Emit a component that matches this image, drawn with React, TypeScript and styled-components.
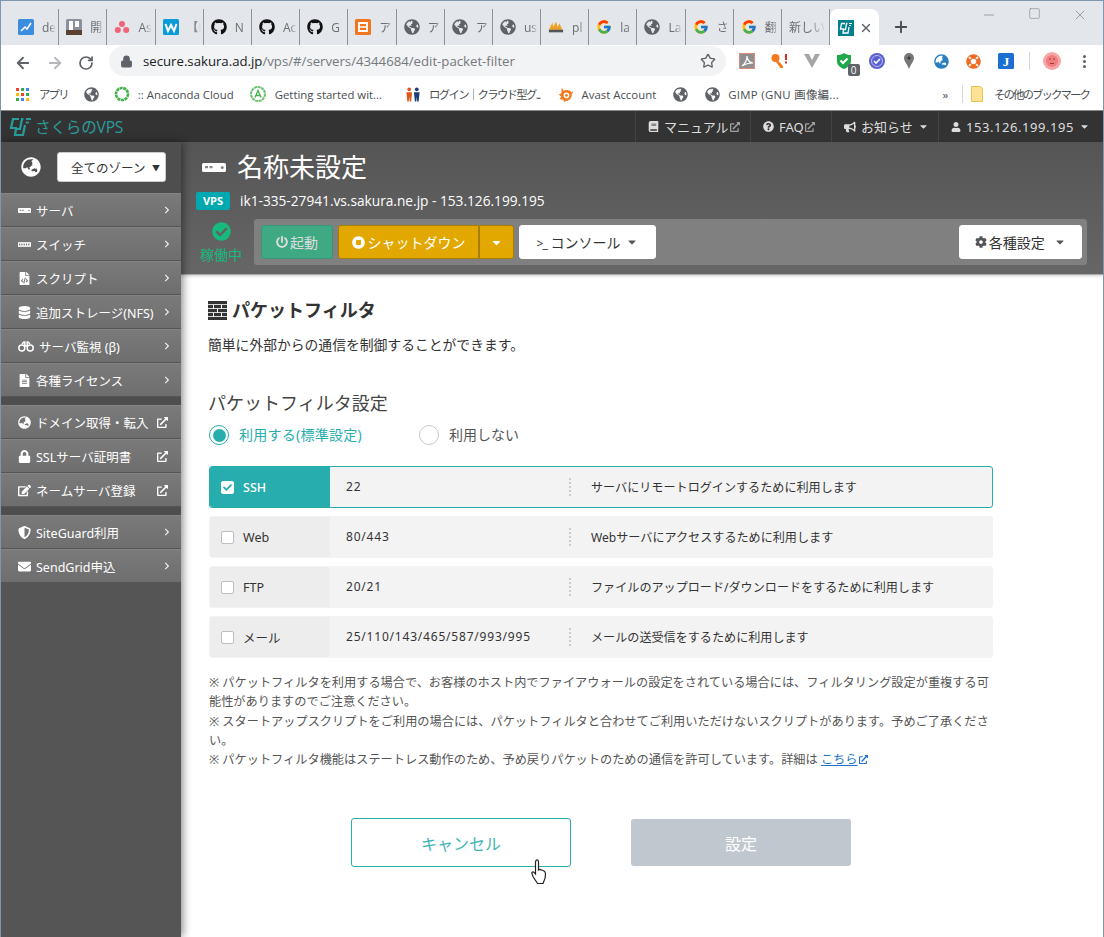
import React from "react";
import styled, { createGlobalStyle } from "styled-components";
import { ArrowLeft, ArrowRight, RotateCw, Star, Lock, Plus, X, Minus, Square } from "lucide-react";
import {
  FaBook, FaQuestionCircle, FaBullhorn, FaUser, FaGlobeAsia, FaFileAlt, FaDatabase, FaLock, FaEdit,
  FaShieldAlt, FaEnvelope, FaExternalLinkAlt, FaCog, FaPowerOff, FaStopCircle, FaCheckCircle, FaCaretDown, FaGithub,
  FaGlobeAmericas, FaCheck, FaFileCode, FaLifeRing, FaChevronRight,
} from "react-icons/fa";
import { FcGoogle } from "react-icons/fc";

const UI = `"Open Sans", "Noto Sans CJK JP", sans-serif`;
const PAGE = `"Noto Sans", "Noto Sans CJK JP", sans-serif`;

const Global = createGlobalStyle`
  html, body { margin: 0; padding: 0; background: #fff; }
  * { box-sizing: border-box; }
`;

const Win = styled.div`
  position: relative; width: 1104px; height: 937px; overflow: hidden; display: flex; flex-direction: column;
  border: 1px solid #7e97ad; border-bottom: 0; background: #fff; font-family: ${PAGE};
`;
const TabStrip = styled.div`
  height: 44px; background: #e3e6ea; display: flex; padding: 8px 0 0 10px; flex: none;
`;
const Tab = styled.div`
  width: 48.2px; height: 36px; display: flex; align-items: center; padding-left: 7px; overflow: hidden; flex: none;
  border-right: 1px solid #8f9296;
`;
const TabInner = styled.div`
  display: flex; align-items: center; gap: 8px; height: 36px; width: 100%; overflow: hidden;
`;
const TabIcon = styled.span`
  width: 16px; height: 16px; flex: none; display: flex; align-items: center; justify-content: center; font-size: 16px; color: ${p => p.color || "#5f6368"};
`;
const TabLabel = styled.span`
  font: 12px ${UI}; color: #6a6d70; white-space: nowrap; overflow: hidden;
  width: 14px; -webkit-mask-image: linear-gradient(90deg, #000 50%, transparent);
`;
const PlainTabLabel = styled(TabLabel)`
  width: 38px; flex: none;
`;
const ActiveTab = styled.div`
  width: 49px; height: 37px; background: #fff; border-radius: 8px 8px 0 0; display: flex; align-items: center; padding-left: 8px; gap: 5px; flex: none;
`;
const NewTab = styled.div`
  margin-left: 13px; height: 36px; display: flex; align-items: center; color: #494c50;
`;
const WinCtrls = styled.div`
  margin-left: auto; display: flex; gap: 31px; padding: 0 15px 0 0; height: 24px; margin-top: -2px; align-items: flex-start; color: #7a7c80;
`;
const Toolbar = styled.div`
  height: 36px; background: #fff; display: flex; align-items: center; flex: none; padding-left: 13px;
`;
const NavBtn = styled.span`
  width: 32px; display: flex; color: ${p => p.color || "#5f6368"};
`;
const Omni = styled.div`
  margin-left: -1px; width: 617px; height: 30px; border-radius: 15px; background: #f1f3f4; display: flex; align-items: center; padding: 0 10px 0 11px; gap: 10px; font: 13.2px ${UI}; color: #75787c; margin-top: -4px;
  b { font-weight: 400; color: #202124; }
`;
const OmniText = styled.span`
  flex: 1;
`;
const Exts = styled.div`
  display: flex; align-items: center; margin-left: 5px; margin-top: -4px;
`;
const Ext = styled.span`
  position: relative; width: 32.4px; height: 24px; display: flex; align-items: center; justify-content: center; font-size: 16px; color: ${p => p.color || "#555"};
`;
const Badge = styled.span`
  position: absolute; right: 1px; bottom: -3px; width: 12px; height: 12px; background: #5f6368; color: #fff; font: 10px/12px ${UI}; text-align: center; border-radius: 2px;
`;
const Sep = styled.span`
  width: 1px; height: 18px; background: #d4d6d8; margin: 0 6px;
`;
const Kebab = styled.span`
  display: flex; flex-direction: column; gap: 2px;
  i { width: 3px; height: 3px; border-radius: 50%; background: #5f6368; display: block; }
`;
const Bookmarks = styled.div`
  height: 29px; padding: 0 0 3px 15px; background: #fff; display: flex; align-items: center; flex: none; font: 11.4px ${UI}; color: #4a4d50;
`;
const BM = styled.span`
  display: flex; align-items: center; gap: ${p => p.$gap ?? 8}px; margin-right: ${p => p.$mr ?? 16}px; white-space: nowrap; letter-spacing: ${p => p.$ls ?? 0}px;
`;
const BMIcon = styled.span`
  width: 16px; height: 16px; display: flex; align-items: center; justify-content: center; font-size: 15px; color: ${p => p.color || "#5f6368"}; flex: none;
`;
const BMRight = styled.div`
  margin-left: auto; display: flex; align-items: center; padding-right: 14px;
`;
const TopNav = styled.div`
  height: 32px; background: #333; display: flex; flex: none; border-top: 1px solid #888;
  padding-left: 8px; align-items: stretch; justify-content: space-between;
`;
const Brand = styled.div`
  display: flex; align-items: center; gap: 2px; color: #2b9c9c; font: 15.6px ${UI}; letter-spacing: -.2px;
`;
const NavItems = styled.div`
  display: flex; font: 13px ${PAGE}; color: #ddd;
`;
const NavItem = styled.div`
  width: ${p => p.$w}px; display: flex; align-items: center; gap: 5px; padding: 0 0 0 12px; border-left: 1px solid #444; white-space: nowrap; letter-spacing: ${p => p.$ls ?? 0}px;
  svg { flex: none; }
`;
const Ext2 = styled(FaExternalLinkAlt)`
  font-size: 10px; opacity: .65; margin-left: -4px;
`;
const Body = styled.div`
  flex: 1; display: flex; min-height: 0;
`;
const Side = styled.div`
  width: 180px; flex: none; background: #555; box-shadow: 2px 0 8px rgba(0,0,0,.45); z-index: 2; display: flex; flex-direction: column;
`;
const ZoneBar = styled.div`
  height: 51px; padding: 0 15px 1px 20px; background: #4e4e4e; display: flex; align-items: center; gap: 16px; color: #fff; font-size: 20px; flex: none;
`;
const ZoneSel = styled.div`
  flex: 1; height: 30px; background: #fff; border-radius: 3px; border: 1px solid #ccc; font: 12.5px ${PAGE}; color: #333; display: flex; align-items: center; justify-content: space-between; padding: 0 5px 0 13px;
  i { font-style: normal; font-size: 8px; }
`;
const Item = styled.div`
  height: 34px; display: flex; align-items: center; background: linear-gradient(#7a7a7a, #6e6e6e); border-bottom: 1px solid #555; border-top: 1px solid #848484; color: #fff; font: 12.5px ${PAGE}; padding: 0 13px 0 17px; gap: 5px; white-space: nowrap; flex: none;
  svg { flex: none; }
  span { flex: 1; }
`;
const Arrow = styled.span`
  flex: none !important; margin-right: -3px; display: flex; font-size: 8px; color: #eee;
`;
const Gap = styled.div`
  height: 8px; background: #4e4e4e; flex: none;
`;
const Main = styled.div`
  flex: 1; min-width: 0; display: flex; flex-direction: column;
`;
const Head = styled.div`
  height: 133px; flex: none; background: linear-gradient(#555, #666); border-bottom: 1px solid #aaa; box-shadow: 0 1px 3px rgba(0,0,0,.2); padding: 8px 16px 0 15px; color: #fff;
`;
const TitleRow = styled.div`
  display: flex; align-items: center; gap: 9px; padding-left: 4px; font: 26px/34px ${PAGE};
`;
const HostRow = styled.div`
  margin-top: 8px; display: flex; align-items: center; gap: 10px; font: 500 13.7px/18px ${UI}; white-space: nowrap;
`;
const VpsBadge = styled.span`
  width: 34px; height: 18px; background: #00a9b0; border-radius: 2px; font: 700 11px/18px ${UI}; text-align: center;
`;
const CtrlRow = styled.div`
  display: flex; align-items: center; margin-top: 9px;
`;
const Status = styled.div`
  width: 58px; padding: 2px 8px 0 0; flex: none; display: flex; flex-direction: column; align-items: center; color: #17b97e; font: 14px/18px ${PAGE}; gap: 5px;
  svg { font-size: 19px; }
`;
const Panel = styled.div`
  flex: 1; height: 46px; background: #808080; border-radius: 3px; display: flex; align-items: center; padding: 0 5px 0 7px; gap: 5px; font: 14px ${PAGE};
`;
const Btn = styled.div`
  height: 34px; width: ${p => p.$w}px; border-radius: 3px; display: flex; align-items: center; justify-content: center; gap: ${p => p.$gap ?? 2}px; flex: none; white-space: nowrap;
  background: ${p => p.$bg}; color: ${p => p.$fg || "#fff"}; border: 1px solid ${p => p.$bd || p.$bg};
`;
const SplitBtn = styled(Btn)`
  border-radius: 3px 0 0 3px; margin-right: -5px;
`;
const SplitEnd = styled(Btn)`
  border-radius: 0 3px 3px 0; border-left: 1px solid #a67e00;
`;
const Prompt = styled.span`
  font-size: 12px; letter-spacing: -1px;
`;
const Push = styled.div`
  margin-left: auto;
`;
const Content = styled.div`
  flex: 1; padding: 24px 0 0 27px; position: relative;
`;
const H2 = styled.h2`
  margin: 0; display: flex; align-items: center; gap: 5px; font: 700 18px/22px ${PAGE}; color: #333;
`;
const Lead = styled.p`
  margin: 14px 0 0 0; font: 13.8px/20px ${PAGE}; color: #333;
`;
const H3 = styled.h3`
  margin: 35px 0 0; font: 400 18px/26px ${PAGE}; color: #444;
`;
const Radios = styled.div`
  display: flex; align-items: center; margin-top: 9px; margin-left: 1px; font: 14px/20px ${PAGE};
`;
const Radio = styled.div`
  display: flex; align-items: center; gap: 10px; color: ${p => p.$on ? "#27adad" : "#555"}; width: ${p => p.$w}px; letter-spacing: ${p => p.$on ? ".25px" : "0"};
`;
const Dot = styled.span`
  width: 20px; height: 20px; border-radius: 50%; flex: none; background: #fff; border: 1px solid ${p => p.$on ? "#27adad" : "#c5cad1"}; display: flex; align-items: center; justify-content: center;
  &::after { content: ""; width: 13px; height: 13px; border-radius: 50%; background: ${p => p.$on ? "#27adad" : "transparent"}; }
`;
const Rows = styled.div`
  width: 784px; margin-top: 21px; display: flex; flex-direction: column; gap: 8px; margin-left: 1px;
`;
const Row = styled.div`
  height: 42px; display: flex; align-items: center; background: #f3f3f3; border-radius: 3px; overflow: hidden; font: 12px ${PAGE}; color: #333; border: 1px solid ${p => p.$on ? "#27adad" : "#f3f3f3"};
`;
const Name = styled.div`
  width: 120px; align-self: stretch; display: flex; align-items: center; gap: 9px; padding-left: 11px; flex: none; font-size: 12.5px;
  background: ${p => p.$on ? "#27adad" : "#ededed"}; color: ${p => p.$on ? "#fff" : "#333"}; ${p => p.$on ? "font-weight: 500;" : ""}
`;
const Check = styled.span`
  width: 13px; height: 13px; border-radius: 2px; flex: none; display: flex; align-items: center; justify-content: center; color: #27adad; font-size: 9px;
  background: #fff; border: 1px solid ${p => p.$on ? "#fff" : "#b9bec5"};
`;
const Port = styled.div`
  width: 241px; padding-left: 16px; flex: none; border-right: 2px dotted #ccc; height: 18px; line-height: 18px; letter-spacing: .8px;
`;
const Desc = styled.div`
  padding-left: 20px; font-size: 12.1px; white-space: nowrap;
`;
const Notes = styled.div`
  width: 784px; margin: 15px 0 0 1px; font: 12.2px/19.3px ${PAGE}; color: #555;
  a { color: #1a73c9; text-decoration: underline; }
  svg { font-size: 9px; color: #1a73c9; margin-left: 2px; }
`;
const Actions = styled.div`
  display: flex; gap: 60px; margin: 49px 0 0 143px; align-items: center; font: 16px ${PAGE};
`;
const Cancel = styled.div`
  width: 220px; height: 49px; border: 1px solid #27adad; border-radius: 3px; color: #3db5b5; display: flex; align-items: center; justify-content: center;
`;
const Submit = styled.div`
  width: 220px; height: 47px; background: #c1c7cf; border-radius: 3px; color: #fff; display: flex; align-items: center; justify-content: center;
`;
const Cursor = styled.svg`
  position: absolute; left: 530px; top: 858px; z-index: 5;
`;

const Sakura = () => (
  <svg width="24" height="20" viewBox="0 0 24 20" fill="none" stroke="#2b9c9c" strokeWidth="2.2">
    <path d="M10 2H4L2 11H8M14.500 2H13L11 12H7L6 18H14L16 8" />
    <path d="M17 2h5M16.800 5.500h3" />
  </svg>
);
const ServerIcon = ({ w = 16, h = 6 }: { w?: number; h?: number }) => (
  <svg width={w} height={h} viewBox="0 0 16 6">
    <rect width="16" height="6" rx="1" fill="#fff" />
    <rect x="2" y="2" width="2" height="1.500" fill="#888" /><rect x="5" y="2" width="2" height="1.500" fill="#888" />
    <circle cx="13.500" cy="3" r="1" fill="#888" />
  </svg>
);
const SwitchIcon = () => (
  <svg width="13" height="5" viewBox="0 0 14 5"><rect width="14" height="5" fill="#fff" />
    {[1, 3.5, 6, 8.5, 11].map(x => <rect key={x} x={x} y="1.500" width="1.400" height="2" fill="#777" />)}</svg>
);
const Binoc = () => (
  <svg width="16" height="11" viewBox="0 0 16 11" fill="none" stroke="#fff" strokeWidth="1.500">
    <circle cx="3.800" cy="7" r="3" /><circle cx="12.200" cy="7" r="3" /><path d="M4 3 6 1h.8v4h2.400V1h.8l2 2" />
  </svg>
);
const Brick = () => (
  <svg width="19" height="19" viewBox="0 0 19 19" fill="#333">
    <rect y="0" width="19" height="3.200" /><rect y="4" width="5" height="3.200" /><rect x="6" y="4" width="7" height="3.200" /><rect x="14" y="4" width="5" height="3.200" />
    <rect y="8" width="9" height="3.200" /><rect x="10" y="8" width="9" height="3.200" /><rect y="12" width="5" height="3.200" /><rect x="6" y="12" width="7" height="3.200" /><rect x="14" y="12" width="5" height="3.200" />
    <rect y="16" width="19" height="3" />
  </svg>
);
const Anaconda = () => (
  <svg width="16" height="16" viewBox="0 0 16 16"><circle cx="8" cy="8" r="6" fill="none" stroke="#43b049" strokeWidth="2.600" strokeDasharray="3 .6" /></svg>
);
const AIcon = () => (
  <svg width="16" height="16" viewBox="0 0 16 16"><circle cx="8" cy="8" r="7" fill="none" stroke="#6cc070" strokeWidth="2" strokeDasharray="3 .6" />
    <path d="M5 11.500 8 4.500l3 7M6 9.500h4" fill="none" stroke="#4caf50" strokeWidth="1.400" /></svg>
);
const People = () => (
  <svg width="17" height="17" viewBox="0 0 17 17">
    <circle cx="4.500" cy="3" r="2" fill="#e0561b" /><path d="M1.500 6h6l-1 10H5L4.500 11 4 16H2.500z" fill="#e0561b" />
    <circle cx="12.500" cy="3" r="2" fill="#1d3c78" /><path d="M9.500 6h6l-1 10H13l-.5-5-.5 5h-1.500z" fill="#1d3c78" />
  </svg>
);
const Avast = () => (
  <svg width="17" height="17" viewBox="0 0 17 17"><path d="M4 1 6 4.500C9 3 13 4 14 6L16.500 5 14.500 8.500C15 12 12 15.500 8 15.500L7 16.800 5.500 14 1.500 13.500 3.500 11 .8 8.500 3.500 7.500z" fill="#f47a20" />
    <circle cx="9" cy="9.500" r="3" fill="#fff" /><circle cx="9" cy="9.500" r="1.400" fill="#f47a20" /></svg>
);
const Apps = () => (
  <svg width="13" height="13" viewBox="0 0 13 13">
    {[["#ea4335", "#34a853", "#4285f4"], ["#fbbc05", "#ea4335", "#34a853"], ["#34a853", "#4285f4", "#fbbc05"]].map((r, y) => r.map((c, x) => <rect key={`${x}${y}`} x={x * 5} y={y * 5} width="3" height="3" fill={c} />))}
  </svg>
);
const Folder = () => (
  <svg width="12" height="16" viewBox="0 0 12 16"><path d="M.5.500h9l2 2v13H.5z" fill="#fde293" stroke="#e8c34f" /></svg>
);
const Asana = () => (
  <svg width="16" height="16" viewBox="0 0 16 16" fill="#f0647a"><circle cx="8" cy="5" r="3" /><circle cx="3.800" cy="11" r="3" /><circle cx="12.200" cy="11" r="3" /></svg>
);
const SiteLogo = () => (
  <svg width="16" height="16" viewBox="0 0 16 16"><rect width="16" height="16" fill="#007f8c" /><path d="M7 3.500H3.500L2.500 9H6M9.500 3.500H8.500L7.500 9.500H5.500L5 13H10L11 7" stroke="#fff" strokeWidth="1.300" fill="none" /><path d="M11 3.500h3M11 5.500h2" stroke="#fff" strokeWidth="1.200" /></svg>
);
const Tile = ({ bg, children }: { bg: string; children?: React.ReactNode }) => (
  <svg width="16" height="16" viewBox="0 0 16 16"><rect width="16" height="16" rx="1.500" fill={bg} />{children}</svg>
);

const tabs: { icon: React.ReactNode; label: string }[] = [
  { icon: <Tile bg="#3c8ce0"><path d="M3 12 7 8l2 2 4-6" stroke="#fff" strokeWidth="1.500" fill="none" /></Tile>, label: "de" },
  { icon: <Tile bg="#8d8f9a"><path d="M3 2h4v9H3zM9 2h4v6H9z" fill="#fff" /><rect y="11" width="16" height="5" fill="#5a4030" /></Tile>, label: "開" },
  { icon: <Asana />, label: "As" },
  { icon: <Tile bg="#0d9bd8"><path d="M2.500 5l2.500 7 3-6 3 6 2.500-7" stroke="#fff" strokeWidth="2" fill="none" /></Tile>, label: "【I" },
  { icon: <FaGithub color="#111" />, label: "N" },
  { icon: <FaGithub color="#111" />, label: "Ac" },
  { icon: <FaGithub color="#111" />, label: "G" },
  { icon: <Tile bg="#f0761f"><path d="M4 4h8v8H4z" fill="none" stroke="#fff" strokeWidth="1.800" /><path d="M4 8h8" stroke="#fff" strokeWidth="1.500" /></Tile>, label: "ア" },
  { icon: <FaGlobeAmericas />, label: "ア" },
  { icon: <FaGlobeAmericas />, label: "ア" },
  { icon: <FaGlobeAmericas />, label: "us" },
  { icon: <svg width="18" height="14" viewBox="0 0 18 14"><path d="M1 10 5 2l1 5 3-6 2 6 2-4 3 7z" fill="#f0a020" /><rect x="1" y="10" width="16" height="3" fill="#555" /></svg>, label: "pl" },
  { icon: <FcGoogle />, label: "la" },
  { icon: <FaGlobeAmericas />, label: "La" },
  { icon: <FcGoogle />, label: "さ" },
  { icon: <FcGoogle />, label: "翻" },
];

const menu1: [React.ReactNode, string][] = [
  [<ServerIcon w={13} h={5} />, "サーバ"],
  [<SwitchIcon />, "スイッチ"],
  [<FaFileCode size={13} />, "スクリプト"],
  [<FaDatabase size={13} />, "追加ストレージ(NFS)"],
  [<Binoc />, "サーバ監視 (β)"],
  [<FaFileAlt size={13} />, "各種ライセンス"],
];
const menu2: [React.ReactNode, string][] = [
  [<FaGlobeAsia size={13} />, "ドメイン取得・転入"],
  [<FaLock size={13} />, "SSLサーバ証明書"],
  [<FaEdit size={13} />, "ネームサーバ登録"],
];
const menu3: [React.ReactNode, string][] = [
  [<FaShieldAlt size={13} />, "SiteGuard利用"],
  [<FaEnvelope size={13} />, "SendGrid申込"],
];

const rows = [
  { name: "SSH", port: "22", desc: "サーバにリモートログインするために利用します", on: true },
  { name: "Web", port: "80/443", desc: "Webサーバにアクセスするために利用します", on: false },
  { name: "FTP", port: "20/21", desc: "ファイルのアップロード/ダウンロードをするために利用します", on: false },
  { name: "メール", port: "25/110/143/465/587/993/995", desc: "メールの送受信をするために利用します", on: false },
];

const MenuRow = ({ icon, label, ext }: { icon: React.ReactNode; label: string; ext?: boolean }) => (
  <Item>
    {icon}
    <span>{label}</span>
    {ext ? <FaExternalLinkAlt size={11} /> : <Arrow><FaChevronRight /></Arrow>}
  </Item>
);

const ActiveTabGroup = () => (
  <>
    <Tab><TabInner><PlainTabLabel>新しい</PlainTabLabel></TabInner></Tab>
    <ActiveTab>
      <SiteLogo />
      <X size={14} color="#5f6368" strokeWidth={2.5} />
    </ActiveTab>
    <NewTab><Plus size={18} strokeWidth={2.5} /></NewTab>
    <WinCtrls>
      <Minus size={16} strokeWidth={1} />
      <Square size={13} strokeWidth={1} />
      <X size={16} strokeWidth={1} />
    </WinCtrls>
  </>
);

export default function App() {
  return (
    <Win>
      <Global />
      <TabStrip>
        {tabs.map((t, i) => (
          <Tab key={i}>
            <TabInner>
              <TabIcon>{t.icon}</TabIcon>
              <TabLabel>{t.label}</TabLabel>
            </TabInner>
          </Tab>
        ))}
        <ActiveTabGroup />
      </TabStrip>
      <Toolbar>
        <NavBtn><ArrowLeft size={18} strokeWidth={2.4} /></NavBtn>
        <NavBtn color="#b5b7ba"><ArrowRight size={18} strokeWidth={2.4} /></NavBtn>
        <NavBtn><RotateCw size={16} strokeWidth={2.6} /></NavBtn>
        <Omni>
          <Lock size={13} fill="#5f6368" color="#5f6368" />
          <OmniText><b>secure.sakura.ad.jp</b>/vps/#/servers/4344684/edit-packet-filter</OmniText>
          <Star size={16} color="#5f6368" />
        </Omni>
        <Exts>
          <Ext><svg width="16" height="16" viewBox="0 0 16 16"><rect x=".5" y=".5" width="15" height="15" fill="#8f8f8f" stroke="#e08a7a" /><path d="M3 13c4-3 5-7 5-10 0 4 3 7 6 7-4 0-8 1-11 3z" fill="none" stroke="#fff" strokeWidth="1.200" /></svg></Ext>
          <Ext><svg width="17" height="16" viewBox="0 0 17 16"><circle cx="4.500" cy="5" r="4" fill="#f47a20" /><path d="M6.500 7 12 13v2h-2.500L5 9z" fill="#f47a20" /><rect x="14" y="1" width="2" height="6" fill="#d32f2f" /><rect x="14" y="8.500" width="2" height="2" fill="#d32f2f" /></svg></Ext>
          <Ext><svg width="16" height="14" viewBox="0 0 16 14"><path d="M0 0h5l3 6 3-6h5L8 14z" fill="#a5a5a5" /></svg></Ext>
          <Ext><svg width="14" height="16" viewBox="0 0 14 16"><path d="M7 0c2 1.500 4 2 7 2v6c0 4-3 6.500-7 8-4-1.500-7-4-7-8V2c3 0 5-.5 7-2z" fill="#1fa84d" /><path d="M3.500 7.500 6 10l4.500-4.500" stroke="#fff" strokeWidth="2" fill="none" /></svg><Badge>0</Badge></Ext>
          <Ext><svg width="16" height="16" viewBox="0 0 16 16"><circle cx="8" cy="8" r="8" fill="#5a5fcf" /><circle cx="8" cy="8" r="5.500" fill="none" stroke="#fff" strokeWidth=".6" /><path d="M5 8l2 2 4-4" stroke="#fff" strokeWidth="1.600" fill="none" /></svg></Ext>
          <Ext><svg width="10" height="16" viewBox="0 0 10 16"><path d="M5 0a5 5 0 0 1 5 5c0 3-3 6-5 11C3 11 0 8 0 5a5 5 0 0 1 5-5z" fill="#777" /><circle cx="5" cy="5" r="1.500" fill="#333" /></svg></Ext>
          <Ext color="#2a7fc0"><FaGlobeAsia size={15} /></Ext>
          <Ext color="#f26a21"><FaLifeRing size={15} /></Ext>
          <Ext><Tile bg="#1a6fd0"><text x="8" y="13" fontSize="13" fontWeight="700" fontFamily="Liberation Serif" fill="#fff" textAnchor="middle">J</text></Tile></Ext>
          <Sep />
          <Ext><svg width="18" height="18" viewBox="0 0 18 18"><circle cx="9" cy="9" r="9" fill="#f7a5a5" /><circle cx="9" cy="9" r="6" fill="#ef7f7f" /><path d="M6 7h2M10 7h2M7 11.500h4" stroke="#a33" strokeWidth="1" /></svg></Ext>
          <Ext><Kebab><i /><i /><i /></Kebab></Ext>
        </Exts>
      </Toolbar>
      <Bookmarks>
        <BM $mr={16} $gap={10} $ls={-1.8}><Apps />アプリ</BM>
        <BM $mr={14}><BMIcon><FaGlobeAmericas /></BMIcon></BM>
        <BM><BMIcon><Anaconda /></BMIcon>:: Anaconda Cloud</BM>
        <BM $mr={23} $gap={9}><BMIcon><AIcon /></BMIcon>Getting started wit...</BM>
        <BM $mr={18} $ls={-1.7}><BMIcon><People /></BMIcon>ログイン｜クラウド型グ...</BM>
        <BM><BMIcon><Avast /></BMIcon>Avast Account</BM>
        <BM><BMIcon><FaGlobeAmericas /></BMIcon></BM>
        <BM $ls={.3}><BMIcon><FaGlobeAmericas /></BMIcon>GIMP (GNU 画像編...</BM>
        <BMRight>
          <BM $mr={8}>»</BM>
          <Sep />
          <BM $mr={0} $gap={9} $ls={-1.9}><BMIcon><Folder /></BMIcon>その他のブックマーク</BM>
        </BMRight>
      </Bookmarks>
      <TopNav>
        <Brand><Sakura />さくらのVPS</Brand>
        <NavItems>
          <NavItem $w={115}><FaBook size={11} /> マニュアル<Ext2 /></NavItem>
          <NavItem $w={81}><FaQuestionCircle size={11} /> FAQ<Ext2 /></NavItem>
          <NavItem $w={107}><FaBullhorn size={12} /> お知らせ <FaCaretDown size={11} /></NavItem>
          <NavItem $w={165} $ls={.55}><FaUser size={10} /> 153.126.199.195 <FaCaretDown size={11} /></NavItem>
        </NavItems>
      </TopNav>
      <Body>
        <Side>
          <ZoneBar>
            <FaGlobeAsia />
            <ZoneSel>全てのゾーン<i>▼</i></ZoneSel>
          </ZoneBar>
          {menu1.map(([ic, l]) => <MenuRow key={l} icon={ic} label={l} />)}
          <Gap />
          {menu2.map(([ic, l]) => <MenuRow key={l} icon={ic} label={l} ext />)}
          <Gap />
          {menu3.map(([ic, l]) => <MenuRow key={l} icon={ic} label={l} />)}
        </Side>
        <Main>
          <Head>
            <TitleRow><ServerIcon w={28} h={9} />名称未設定</TitleRow>
            <HostRow><VpsBadge>VPS</VpsBadge>ik1-335-27941.vs.sakura.ne.jp - 153.126.199.195</HostRow>
            <CtrlRow>
              <Status><FaCheckCircle />稼働中</Status>
              <Panel>
                <Btn $w={72} $bg="#3fa984" $bd="#37967a" $fg="#ddd"><FaPowerOff size={12} />起動</Btn>
                <SplitBtn $w={141} $bg="#e2a800" $bd="#a67e00" $gap={3}><FaStopCircle size={13} />シャットダウン</SplitBtn>
                <SplitEnd $w={35} $bg="#e2a800" $bd="#a67e00"><FaCaretDown size={13} /></SplitEnd>
                <Btn $w={137} $bg="#fff" $fg="#333" $gap={6}><span><Prompt>&gt;_</Prompt> コンソール</span> <FaCaretDown size={12} color="#555" /></Btn>
                <Push />
                <Btn $w={123} $bg="#fff" $fg="#333"><FaCog size={12} color="#555" />各種設定&nbsp;&nbsp;<FaCaretDown size={12} color="#555" /></Btn>
              </Panel>
            </CtrlRow>
          </Head>
          <Content>
            <H2><Brick />パケットフィルタ</H2>
            <Lead>簡単に外部からの通信を制御することができます。</Lead>
            <H3>パケットフィルタ設定</H3>
            <Radios>
              <Radio $on $w={210}><Dot $on />利用する(標準設定)</Radio>
              <Radio $w={120}><Dot />利用しない</Radio>
            </Radios>
            <Rows>
              {rows.map(r => (
                <Row key={r.name} $on={r.on}>
                  <Name $on={r.on}><Check $on={r.on}>{r.on && <FaCheck />}</Check>{r.name}</Name>
                  <Port>{r.port}</Port>
                  <Desc>{r.desc}</Desc>
                </Row>
              ))}
            </Rows>
            <Notes>
              ※ パケットフィルタを利用する場合で、お客様のホスト内でファイアウォールの設定をされている場合には、フィルタリング設定が重複する可能性がありますのでご注意ください。<br />
              ※ スタートアップスクリプトをご利用の場合には、パケットフィルタと合わせてご利用いただけないスクリプトがあります。予めご了承ください。<br />
              ※ パケットフィルタ機能はステートレス動作のため、予め戻りパケットのための通信を許可しています。詳細は <a>こちら</a><FaExternalLinkAlt />
            </Notes>
            <Actions>
              <Cancel>キャンセル</Cancel>
              <Submit>設定</Submit>
            </Actions>
          </Content>
        </Main>
      </Body>
      <Cursor width="18" height="26" viewBox="0 0 18 26">
        <path d="M5 1.500c1-1 2.500-.5 2.500 1V11l1-.5 1 .2 1 .3 1 .3 1.500.7c1 .5 1.500 1.500 1.500 3 0 3-.5 5-1.500 7l-1 2.500H6.500L2 17.500.8 14c0-1 1.200-1.500 2-.8L4.500 15V3z" fill="#fff" stroke="#222" strokeWidth="1.200" />
      </Cursor>
    </Win>
  );
}
